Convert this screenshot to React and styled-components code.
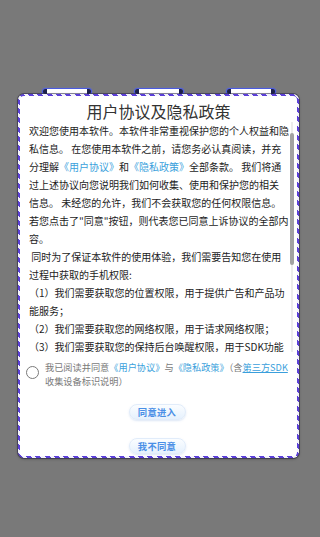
import React from "react";
import styled, { createGlobalStyle } from "styled-components";

const Global = createGlobalStyle`
  html, body { margin: 0; padding: 0; background: #797979; }
  body { font-family: "Noto Sans CJK SC", "Noto Sans", sans-serif; }
`;

const Page = styled.div`
  width: 320px;
  height: 537px;
  box-sizing: border-box;
  padding: 89px 0 0 18px;
  display: flex;
  flex-direction: column;
  background: #797979;
`;

const TabRow = styled.div`
  display: flex;
  gap: 44px;
  padding-left: 25px;
  height: 5px;
`;

const Tab = styled.div`
  width: 48px;
  height: 5px;
  box-sizing: border-box;
  border-radius: 3px;
  background: linear-gradient(
    90deg,
    #1b1f4a 0 4px,
    #ffffff 4px calc(100% - 4px),
    #1b1f4a calc(100% - 4px) 100%
  );
  box-shadow: 0 0 0 1px #4b5be0, 0 0 2px 1px rgba(90, 110, 255, 0.6);
`;

const Dialog = styled.div`
  width: 281px;
  height: 364px;
  box-sizing: border-box;
  border: 2px solid transparent;
  border-radius: 6px;
  background: linear-gradient(#fff, #fff) padding-box,
    repeating-linear-gradient(45deg, #5b3fd8 0 3.6px, #f4f4fb 3.6px 6.6px)
      border-box;
  box-shadow: 0 0 0 1px rgba(40, 36, 70, 0.55), 0 1px 3px rgba(0, 0, 0, 0.35);
  overflow: hidden;
  display: flex;
  flex-direction: column;
`;

const Title = styled.h1`
  margin: 0;
  padding-top: 4px;
  height: 22px;
  line-height: 22px;
  text-align: center;
  font-size: 16px;
  font-weight: 400;
  color: #333;
`;

const BodyRow = styled.div`
  display: flex;
  height: 230px;
  padding-left: 9px;
  padding-right: 3px;
  gap: 1px;
`;

const TextColumn = styled.div`
  flex: 1;
  overflow: hidden;
  font-size: 10px;
  line-height: 18px;
  color: #1c1c1c;
`;

const Line = styled.span`
  display: block;
  white-space: pre;
`;

const Link = styled.span`
  color: #3a9fdc;
  text-decoration: ${(p) => (p.$underline ? "underline" : "none")};
`;

const ScrollTrack = styled.div`
  width: 4px;
  display: flex;
  flex-direction: column;
  background: linear-gradient(90deg, transparent 1px, #ececec 1px 3px, transparent 3px);
`;

const Thumb = styled.div`
  margin-top: 11px;
  height: 132px;
  width: 4px;
  border-radius: 2px;
  background: #a2a2a2;
`;

const ConsentRow = styled.div`
  display: flex;
  align-items: flex-start;
  gap: 6px;
  margin-top: 8px;
  padding-left: 6px;
`;

const Radio = styled.div`
  flex: none;
  width: 13px;
  height: 13px;
  box-sizing: border-box;
  margin-top: 6px;
  border-radius: 50%;
  border: 1.5px solid #7a7a7a;
`;

const ConsentText = styled.p`
  margin: 0;
  font-size: 9.2px;
  line-height: 14px;
  color: #7a7a7a;
  white-space: nowrap;
`;

const ButtonStack = styled.div`
  display: flex;
  flex-direction: column;
  align-items: center;
  gap: 18px;
  margin-top: 16px;
  padding-right: 3px;
`;

const PillButton = styled.button`
  width: 57px;
  height: 16px;
  padding: 0;
  border-radius: 8px;
  border: 1px solid #e1ecfa;
  background: linear-gradient(180deg, #fbfdff 0%, #e6f1fd 100%);
  box-shadow: 0 1px 2px rgba(120, 160, 220, 0.25);
  color: #4a8fe6;
  font-family: inherit;
  font-size: 9.3px;
  font-weight: 700;
  line-height: 14px;
  letter-spacing: 0.3px;
`;

export default function App() {
  return (
    <>
      <Global />
      <Page>
        <TabRow>
          <Tab />
          <Tab />
          <Tab />
        </TabRow>
        <Dialog>
          <Title>用户协议及隐私政策</Title>
          <BodyRow>
            <TextColumn>
              <Line>欢迎您使用本软件。本软件非常重视保护您的个人权益和隐</Line>
              <Line>私信息。 在您使用本软件之前，请您务必认真阅读，并充</Line>
              <Line>
                分理解<Link>《用户协议》</Link>和<Link>《隐私政策》</Link>全部条款。 我们将通
              </Line>
              <Line>过上述协议向您说明我们如何收集、使用和保护您的相关</Line>
              <Line>信息。 未经您的允许，我们不会获取您的任何权限信息。</Line>
              <Line>若您点击了"同意"按钮，则代表您已同意上诉协议的全部内</Line>
              <Line>容。</Line>
              <Line> 同时为了保证本软件的使用体验，我们需要告知您在使用</Line>
              <Line>过程中获取的手机权限:</Line>
              <Line>（1）我们需要获取您的位置权限，用于提供广告和产品功</Line>
              <Line>能服务；</Line>
              <Line>（2）我们需要获取您的网络权限，用于请求网络权限；</Line>
              <Line>（3）我们需要获取您的保持后台唤醒权限，用于SDK功能</Line>
              <Line>的正常使用；</Line>
              <Line>（4）我们需要获取您的存储权限，用于缓存广告素材；</Line>
              <Line>（5）我们需要获取您的设备信息，用于识别设备；</Line>
            </TextColumn>
            <ScrollTrack>
              <Thumb />
            </ScrollTrack>
          </BodyRow>
          <ConsentRow>
            <Radio />
            <ConsentText>
              我已阅读并同意<Link>《用户协议》</Link>与<Link>《隐私政策》</Link>（含
              <Link $underline>第三方SDK</Link>
              <br />
              收集设备标识说明）
            </ConsentText>
          </ConsentRow>
          <ButtonStack>
            <PillButton>同意进入</PillButton>
            <PillButton>我不同意</PillButton>
          </ButtonStack>
        </Dialog>
      </Page>
    </>
  );
}
